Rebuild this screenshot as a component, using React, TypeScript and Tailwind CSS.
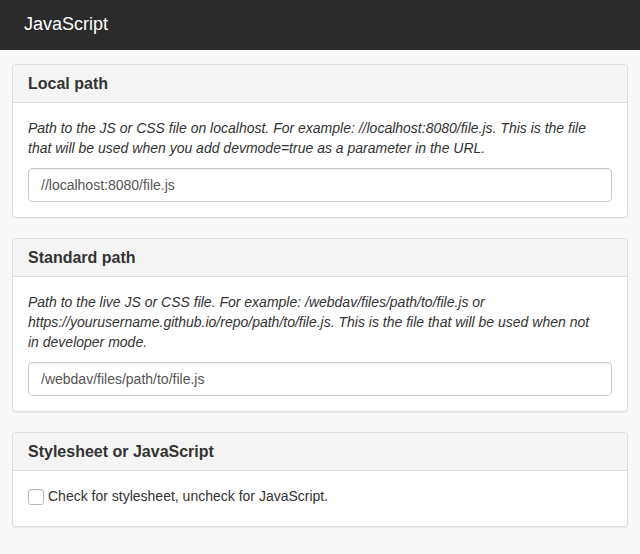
export default function App() {
  const font = { fontFamily: '"Liberation Sans", Arial, sans-serif' };
  return (
    <div className="min-h-[554px] bg-[#f8f8f8] text-[#333]" style={font}>
      {/* Top bar */}
      <div className="h-[50px] bg-[#2b2b2b] flex items-center px-6">
        <span className="text-white text-[18px] leading-[20px] -mt-[2px]">JavaScript</span>
      </div>

      <div className="px-3 pt-[14px] flex flex-col gap-5">
        {/* Local path */}
        <Panel title="Local path">
          <p className="italic text-[14px] leading-[20px] mb-[10px] pr-[15px]">
            Path to the JS or CSS file on localhost. For example: //localhost:8080/file.js. This is the file that will be used when you add devmode=true as a parameter in the URL.
          </p>
          <TextInput value="//localhost:8080/file.js" />
        </Panel>

        {/* Standard path */}
        <Panel title="Standard path">
          <p className="italic text-[14px] leading-[20px] mb-[10px] pr-[15px]">
            Path to the live JS or CSS file. For example: /webdav/files/path/to/file.js or https://yourusername.github.io/repo/path/to/file.js. This is the file that will be used when not in developer mode.
          </p>
          <TextInput value="/webdav/files/path/to/file.js" />
        </Panel>

        {/* Stylesheet toggle */}
        <Panel title="Stylesheet or JavaScript">
          <label className="flex items-start gap-1 h-[25px] text-[14px] leading-[20px]">
            <span className="mt-[3px] w-4 h-4 rounded-[3px] border border-[#b5b5b5] bg-white shadow-[inset_0_1px_1px_rgba(0,0,0,0.05)]" />
            <span>Check for stylesheet, uncheck for JavaScript.</span>
          </label>
        </Panel>
      </div>
    </div>
  );
}

function Panel({ title, children }: { title: string; children: React.ReactNode }) {
  return (
    <div className="bg-white border border-[#dddddd] rounded-[4px] shadow-[0_1px_1px_rgba(0,0,0,0.05)] overflow-hidden">
      <div className="bg-[#f5f5f5] border-b border-[#dddddd] px-[15px] py-[10px]">
        <h3 className="text-[16px] leading-[17px] font-bold">{title}</h3>
      </div>
      <div className="p-[15px]">{children}</div>
    </div>
  );
}

function TextInput({ value }: { value: string }) {
  return (
    <input
      readOnly
      value={value}
      className="block w-full h-[34px] px-3 py-[6px] text-[14px] leading-[20px] text-[#555] bg-white border border-[#cccccc] rounded-[4px] shadow-[inset_0_1px_1px_rgba(0,0,0,0.075)] outline-none"
    />
  );
}
